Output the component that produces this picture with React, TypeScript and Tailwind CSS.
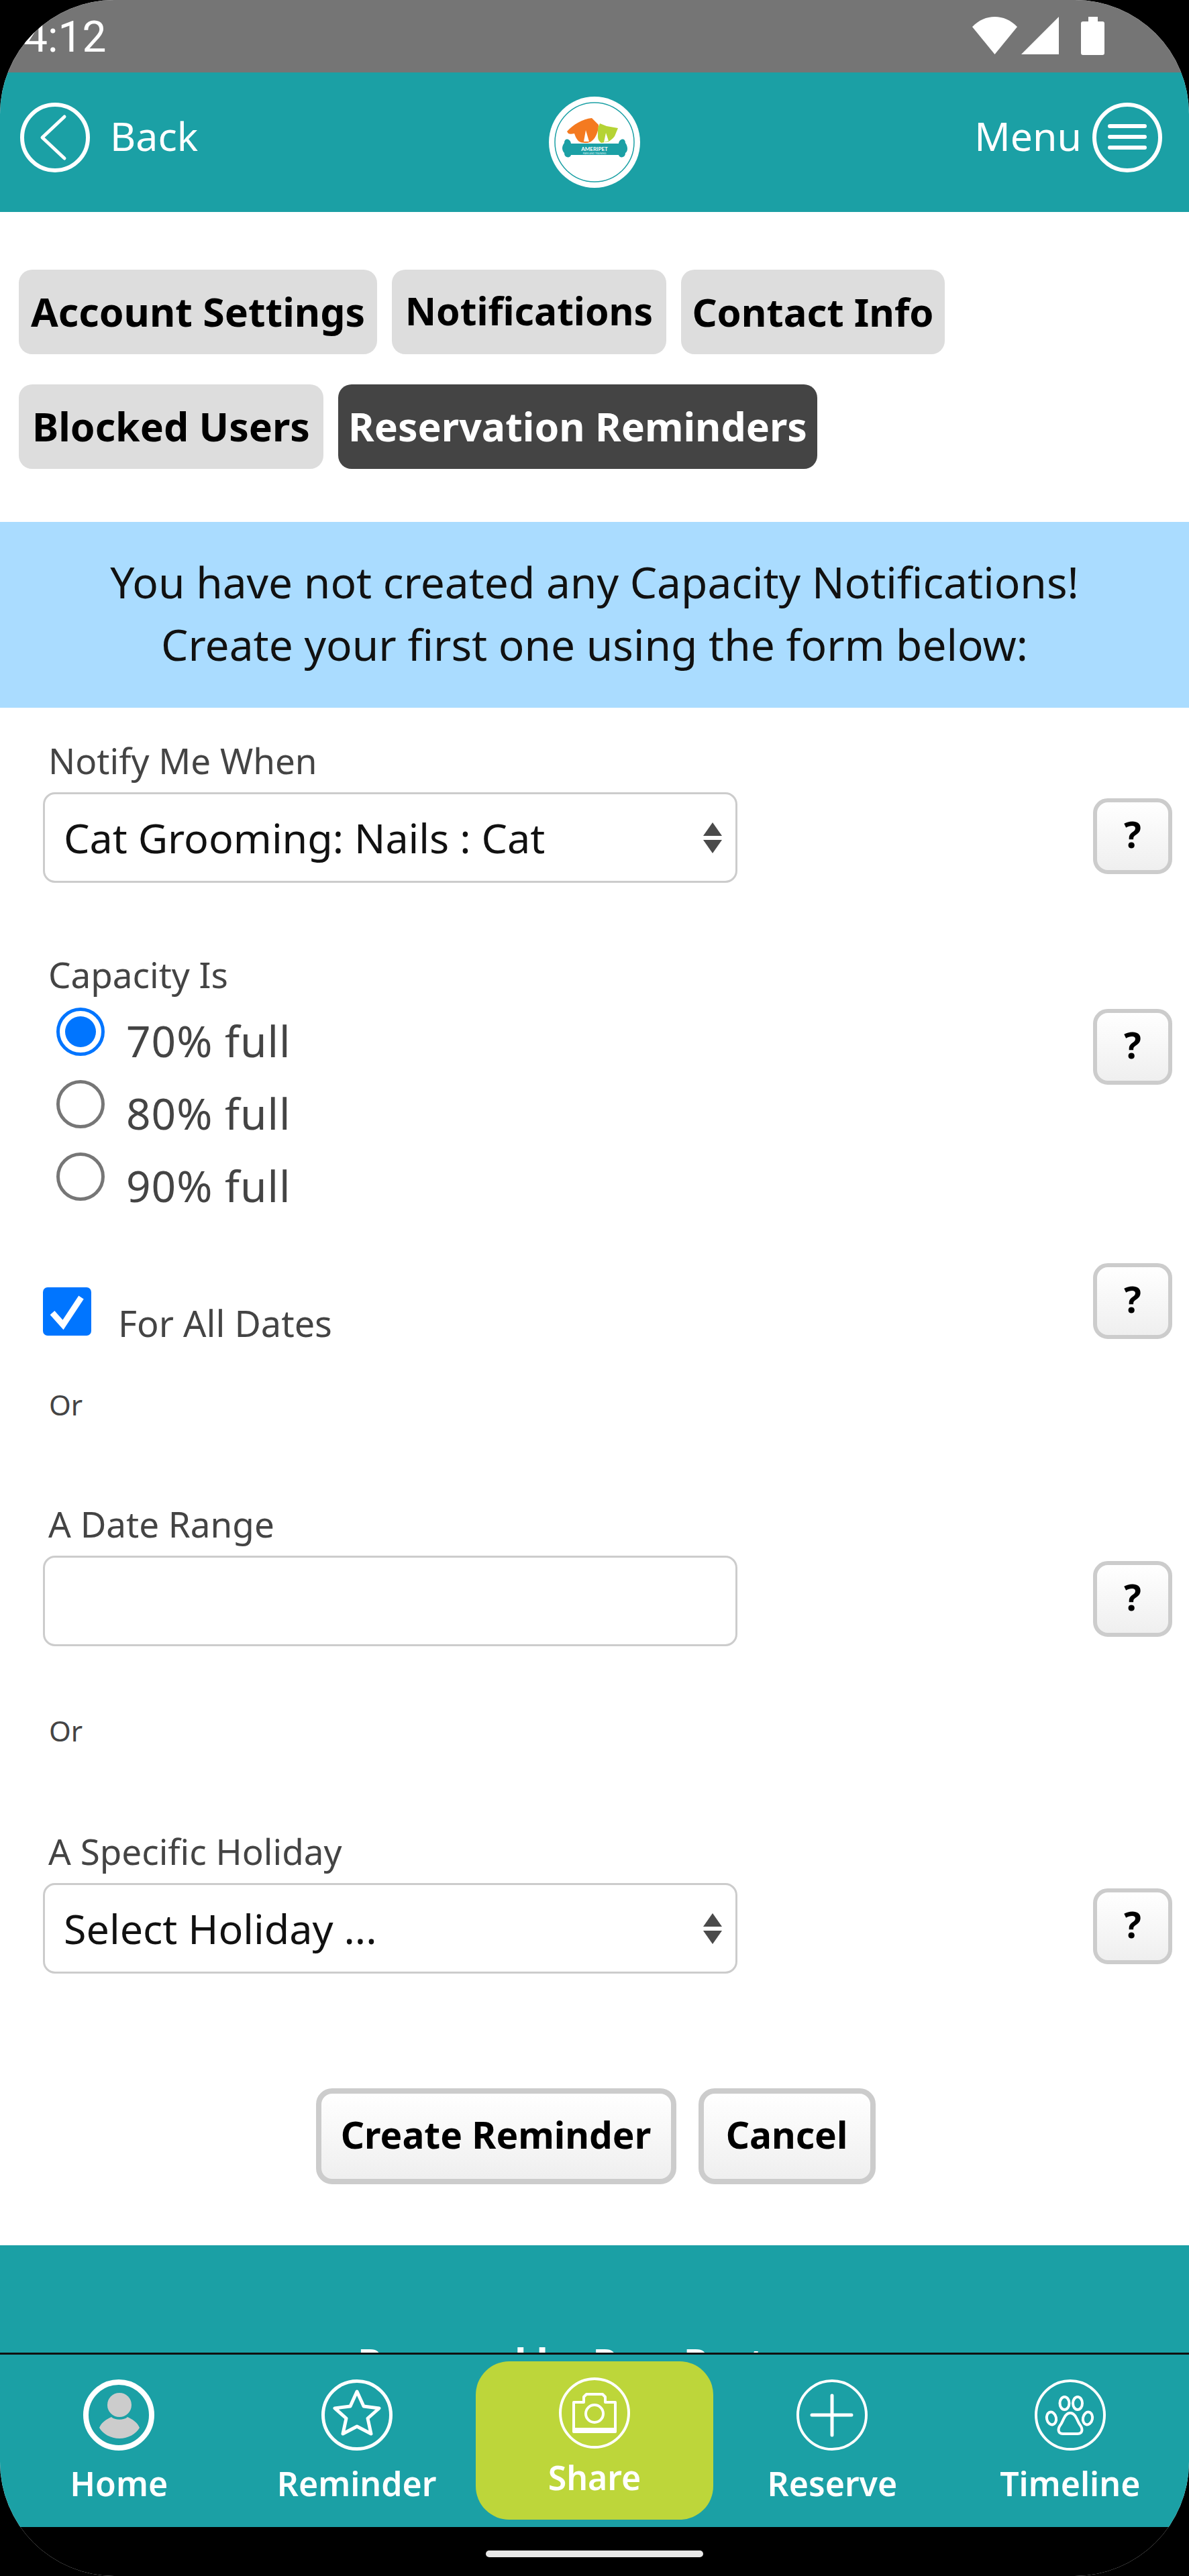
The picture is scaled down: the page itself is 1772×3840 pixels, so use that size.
import { ReactNode } from 'react';

const font = "font-['Noto_Sans','Lato',sans-serif]";

function CircleIcon({ stroke = 5, children }: { stroke?: number; children?: ReactNode }) {
  return (
    <svg width="108" height="108" viewBox="0 0 108 108" fill="none" stroke="#fff" strokeLinecap="round" strokeLinejoin="round">
      <circle cx="54" cy="54" r={54 - stroke / 2 - 1} strokeWidth={stroke} />
      {children}
    </svg>
  );
}

function Logo() {
  return (
    <svg width="136" height="136" viewBox="0 0 136 136">
      <circle cx="68" cy="68" r="68" fill="#fff" />
      <circle cx="68" cy="68" r="59" fill="none" stroke="#1ba0a5" strokeWidth="1.5" />
      <path d="M27 52 C36 42 50 33 64 32 L74 42 C74 50 71 58 68 62 C64 67 60 69 56 69 C50 69 45 68 43 65 C40 61 39 58 38 55 C34 56 31 56 29 55Z" fill="#f47a20" />
      <path d="M55 50 L52 67 L60 67Z" fill="#fff" />
      <path d="M73 47 L76 40 L86 44 L103 47 L98 59 C95 63 92 65 89 67 L78 69 C75 67 73 64 73 60Z" fill="#b5d334" />
      <path d="M85 54 L82 68 L89 66Z" fill="#fff" />
      <path d="M33 70 H104 C105 62 114 61 114 69 C118 74 118 82 114 84 C114 92 105 92 104 87 H33 C32 92 23 92 23 84 C19 80 19 74 23 69 C23 61 32 62 33 70Z" fill="#1ba0a5" />
      <text x="68" y="81" textAnchor="middle" fontSize="8" fontWeight="700" fill="#fff" fontFamily="Lato, sans-serif">AMERIPET</text>
      <text x="68" y="86" textAnchor="middle" fontSize="3.500" fill="#dff3f3" fontFamily="Lato, sans-serif">PARK AND TRAINING</text>
    </svg>
  );
}

function StatusBar() {
  return (
    <div className="h-[108px] bg-[#757575] flex items-start justify-between pl-[35px] pr-[126px] shrink-0">
      <span className="text-[64px] leading-[75px] mt-[18px] text-white font-['Roboto',sans-serif]">4:12</span>
      <svg width="198" height="60" viewBox="0 0 198 60" className="mt-[24px]" fill="#fff">
        <path d="M1 16 C20 -4 49 -4 68 16 L34.500 57Z" />
        <path d="M130 1 V57 H74Z" />
        <path d="M174 1 H188 V8 H195 Q198 8 198 11 V55 Q198 58 195 58 H166 Q163 58 163 55 V11 Q163 8 166 8 H174Z" />
      </svg>
    </div>
  );
}

function Header() {
  return (
    <div className="h-[208px] bg-[#1ba0a5] grid grid-cols-[1fr_auto_1fr] items-center px-[30px] shrink-0 text-white text-[59px] leading-[70px]">
      <div className="flex items-center gap-[30px] mb-[14px]">
        <svg width="104" height="108" viewBox="0 0 104 108" fill="none" stroke="#fff" strokeLinecap="round" strokeLinejoin="round">
          <circle cx="52" cy="54" r="49" strokeWidth="6" />
          <path d="M66 23 L33 54 L66 85" strokeWidth="5" />
        </svg>
        <span className="mb-[6px]">Back</span>
      </div>
      <Logo />
      <div className="flex items-center justify-end gap-[16px] mb-[14px] mr-[10px]">
        <span className="mb-[6px]">Menu</span>
        <svg width="104" height="108" viewBox="0 0 104 108" fill="none" stroke="#fff" strokeLinecap="round">
          <circle cx="52" cy="54" r="49" strokeWidth="6" />
          <path d="M26 37 H78 M26 53 H78 M26 69 H78" strokeWidth="6" />
        </svg>
      </div>
    </div>
  );
}

function Tab({ label, className, active }: { label: string; className: string; active?: boolean }) {
  return (
    <div className={`h-[126px] flex items-center justify-center rounded-[20px] font-bold pb-[2px] ${className} ${active ? 'bg-[#444444] text-white' : 'bg-[#dddddd] text-black'}`}>
      {label}
    </div>
  );
}

function HelpButton({ className = '' }: { className?: string }) {
  return (
    <div className={`w-[118px] h-[113px] rounded-[22px] border-[6px] border-[#cccccc] bg-gradient-to-b from-white to-[#efefef] flex items-center justify-center text-[54px] font-bold text-black pb-[6px] ${className}`}>
      ?
    </div>
  );
}

function Label({ children }: { children: ReactNode }) {
  return <div className="text-[53px] leading-[58px] text-[#444444] ml-[8px]">{children}</div>;
}

function Field({ children, arrows }: { children?: ReactNode; arrows?: boolean }) {
  return (
    <div className="w-[1035px] h-[135px] mt-[18px] rounded-[18px] border-[3px] border-[#cccccc] bg-white flex items-center justify-between pl-[28px] pr-[20px] text-[61px] text-[#111111]">
      <span>{children}</span>
      {arrows && (
        <svg width="28" height="46" viewBox="0 0 28 46" fill="#4a4a4a">
          <path d="M14 0 L28 20 H0Z" />
          <path d="M14 46 L28 26 H0Z" />
        </svg>
      )}
    </div>
  );
}

function Radio({ label, checked }: { label: string; checked?: boolean }) {
  return (
    <div className="flex items-start h-[108px] ml-[20px]">
      <div className={`w-[72px] h-[72px] rounded-full border-[5px] flex items-center justify-center ${checked ? 'border-[#0075ff]' : 'border-[#767676]'}`}>
        {checked && <div className="w-[46px] h-[46px] rounded-full bg-[#0075ff]" />}
      </div>
      <span className="ml-[32px] mt-[15px] text-[64px] leading-[70px] tracking-[1px] text-[#444444]">{label}</span>
    </div>
  );
}

function NavItem({ label, children }: { label: string; children: ReactNode }) {
  return (
    <div className="flex flex-col items-center pt-[36px]">
      {children}
      <span className="mt-[16px] text-[50px] leading-[64px] font-semibold text-white">{label}</span>
    </div>
  );
}

function BottomNav() {
  return (
    <div className="h-[257px] bg-[#1ba0a5] grid grid-cols-5 shrink-0">
      <NavItem label="Home">
        <svg width="108" height="108" viewBox="0 0 108 108" fill="none">
          <circle cx="54" cy="54" r="49" stroke="#fff" strokeWidth="8" />
          <ellipse cx="55" cy="39" rx="18" ry="18" fill="#cccccc" />
          <path d="M25 73 C28 65 36 60 43 57 C48 62 62 62 67 57 C74 60 82 65 85 73 C80 82 68 89 55 89 C42 89 30 82 25 73Z" fill="#cccccc" />
        </svg>
      </NavItem>
      <NavItem label="Reminder">
        <CircleIcon>
          <path d="M54 19 L64 41 L87 44 L70 59 L75 82 L54 71 L33 82 L38 59 L21 44 L44 41 Z" strokeWidth="5" />
        </CircleIcon>
      </NavItem>
      <div className="flex justify-center">
        <div className="w-[356px] h-[236px] mt-[10px] rounded-[50px] bg-[#bdd63a] flex flex-col items-center pt-[23px]">
          <CircleIcon stroke={4}>
            <path d="M23 38 H38 V30 L42 26 H66 L70 30 V38 H85 V82 H23Z" strokeWidth="4" />
            <path d="M23 78 H85" strokeWidth="4" />
            <circle cx="54" cy="55" r="13" strokeWidth="4" />
          </CircleIcon>
          <span className="mt-[10px] text-[50px] leading-[64px] font-semibold text-white">Share</span>
        </div>
      </div>
      <NavItem label="Reserve">
        <CircleIcon stroke={4}>
          <path d="M24 54 H83 M54 25 V84" strokeWidth="5" />
        </CircleIcon>
      </NavItem>
      <NavItem label="Timeline">
        <CircleIcon stroke={4}>
          <ellipse cx="45.500" cy="36.500" rx="7" ry="9.500" strokeWidth="4" />
          <ellipse cx="65" cy="36.500" rx="7" ry="9.500" strokeWidth="4" />
          <ellipse cx="26" cy="59" rx="7" ry="9.500" strokeWidth="4" transform="rotate(-12 26 59)" />
          <ellipse cx="80" cy="59" rx="7" ry="9.500" strokeWidth="4" transform="rotate(12 80 59)" />
          <path d="M54 51 C46 51 44 62 40 68 C35 74 35 82 43 82 H65 C73 82 73 74 68 68 C64 62 62 51 54 51Z" strokeWidth="4" />
        </CircleIcon>
      </NavItem>
    </div>
  );
}

export default function App() {
  return (
    <div className={`w-[1772px] h-[3840px] bg-black ${font}`}>
      <div className="h-full rounded-[170px] overflow-hidden bg-white flex flex-col">
        <StatusBar />
        <Header />

        {/* Tabs */}
        <div className="flex flex-wrap gap-x-[22px] gap-y-[45px] pt-[86px] pl-[28px] pr-[300px] shrink-0">
          <Tab label="Account Settings" className="w-[534px] text-[59px]" />
          <Tab label="Notifications" className="w-[409px] text-[57px]" />
          <Tab label="Contact Info" className="w-[393px] text-[58px]" />
          <Tab label="Blocked Users" className="w-[454px] text-[59px]" />
          <Tab label="Reservation Reminders" className="w-[714px] text-[59px]" active />
        </div>

        {/* Notice */}
        <div className="h-[277px] mt-[79px] bg-[#aadcff] flex flex-col items-center justify-center text-[64px] leading-[93px] text-[#111111] shrink-0 pb-[6px]">
          <div>You have not created any Capacity Notifications!</div>
          <div>Create your first one using the form below:</div>
        </div>

        {/* Form */}
        <div className="flex-1 pl-[64px] pr-[25px] pt-[50px]">
          <div className="flex items-start justify-between">
            <div>
              <Label>Notify Me When</Label>
              <Field arrows>Cat Grooming: Nails : Cat</Field>
            </div>
            <HelpButton className="mt-[85px]" />
          </div>

          <div className="flex items-start justify-between mt-[108px]">
            <div>
              <Label>Capacity Is</Label>
              <div className="mt-[20px]">
                <Radio label="70% full" checked />
                <Radio label="80% full" />
                <Radio label="90% full" />
              </div>
            </div>
            <HelpButton className="mt-[80px]" />
          </div>

          <div className="flex items-start justify-between mt-[57px]">
            <div className="flex items-start mt-[36px]">
              <div className="w-[72px] h-[72px] rounded-[7px] bg-[#0075ff] flex items-center justify-center">
                <svg width="72" height="72" viewBox="0 0 72 72" fill="none" stroke="#fff" strokeWidth="9">
                  <path d="M14 38 L30 56 L57 15" />
                </svg>
              </div>
              <span className="ml-[40px] mt-[22px] text-[54px] leading-[62px] text-[#444444]">For All Dates</span>
            </div>
            <HelpButton />
          </div>

          <div className="ml-[9px] mt-[65px] text-[42px] leading-[52px] text-[#444444]">Or</div>

          <div className="flex items-start justify-between mt-[123px]">
            <div>
              <Label>A Date Range</Label>
              <Field />
            </div>
            <HelpButton className="mt-[84px]" />
          </div>

          <div className="ml-[9px] mt-[100px] text-[42px] leading-[52px] text-[#444444]">Or</div>

          <div className="flex items-start justify-between mt-[125px]">
            <div>
              <Label>A Specific Holiday</Label>
              <Field arrows>Select Holiday ...</Field>
            </div>
            <HelpButton className="mt-[84px]" />
          </div>

          <div className="flex justify-center gap-[33px] mt-[171px] pr-[36px]">
            <div className="w-[537px] h-[143px] rounded-[24px] border-[8px] border-[#cccccc] bg-gradient-to-b from-white to-[#efefef] flex items-center justify-center text-[55px] font-bold text-black pb-[4px]">
              Create Reminder
            </div>
            <div className="w-[264px] h-[143px] rounded-[24px] border-[8px] border-[#cccccc] bg-gradient-to-b from-white to-[#efefef] flex items-center justify-center text-[55px] font-bold text-black pb-[4px]">
              Cancel
            </div>
          </div>
        </div>

        {/* Footer, runs under the nav */}
        <div className="h-[160px] bg-[#1ba0a5] overflow-hidden flex justify-center text-white font-bold text-[58px] leading-[66px] pt-[141px] shrink-0">
          Powered by Paw Partner
        </div>
        <div className="h-[3px] bg-[#111111] shrink-0" />
        <BottomNav />

        {/* Gesture area */}
        <div className="h-[73px] bg-black flex justify-center pt-[35px] shrink-0">
          <div className="w-[324px] h-[10px] rounded-full bg-[#e8e8e8]" />
        </div>
      </div>
    </div>
  );
}
